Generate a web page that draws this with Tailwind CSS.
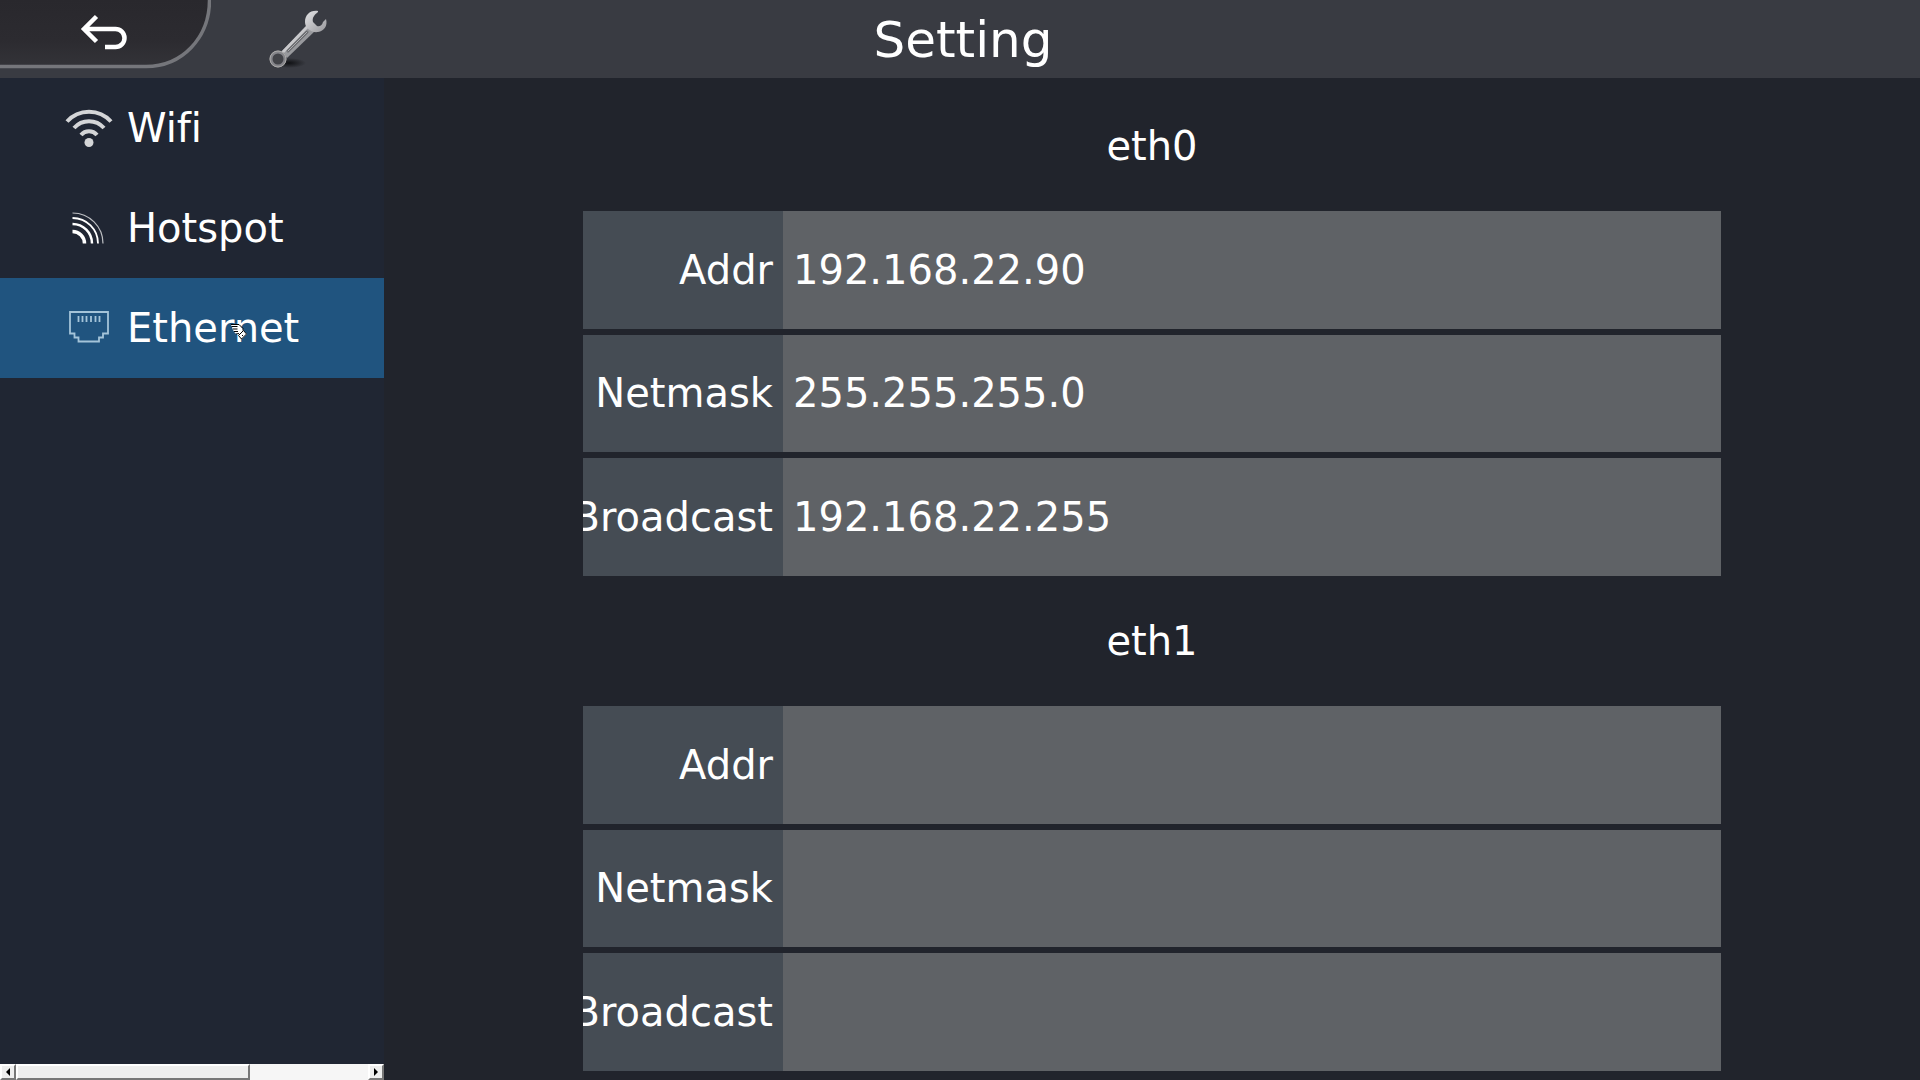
<!DOCTYPE html>
<html lang="en">
<head>
  <meta charset="UTF-8" />
  <meta name="viewport" content="width=device-width, initial-scale=1.0" />
  <title>Setting</title>
  <script src="https://cdn.jsdelivr.net/npm/@tailwindcss/browser@4"></script>
</head>
<body class="flex h-screen flex-col overflow-hidden bg-[#21242c] font-['DejaVu_Sans',sans-serif] text-[40px] leading-[48px] text-white [font-variant-ligatures:none]">
  <!-- Top bar -->
  <header class="grid h-[78px] shrink-0 grid-cols-[1fr_auto_1fr] items-center bg-[#393b42]">
    <div class="flex h-full items-start">
      <button aria-label="Back" class="h-[69px] w-[211px] shrink-0">
        <svg class="block" width="211" height="69" viewBox="0 0 211 69" fill="none">
          <defs>
            <linearGradient id="tab" x1="0" y1="0" x2="0" y2="1">
              <stop offset="0" stop-color="#29282d" />
              <stop offset="0.6" stop-color="#2c2b30" />
              <stop offset="1" stop-color="#333338" />
            </linearGradient>
          </defs>
          <path d="M0 0H209.500C209.500 38 182 66.500 146 66.500H0Z" fill="url(#tab)" />
          <path d="M209.500 0C209.500 38 182 66.500 146 66.500H0" stroke="#75767b" stroke-width="3.500" />
          <path d="M96.500 16.500L84 29L96.500 41.500M84 29H115.500A9 9 0 0 1 115.500 47H105" stroke="#fff" stroke-width="4.500" />
        </svg>
      </button>
      <svg class="ml-[51px] mt-1" width="72" height="68" viewBox="0 0 72 68" fill="none">
        <defs>
          <linearGradient id="steel" x1="0" y1="0" x2="1" y2="1">
            <stop offset="0" stop-color="#e4e4e6" />
            <stop offset="1" stop-color="#97979b" />
          </linearGradient>
          <radialGradient id="shade">
            <stop offset="0" stop-color="#101114" />
            <stop offset="1" stop-color="#101114" stop-opacity="0" />
          </radialGradient>
        </defs>
        <ellipse cx="27" cy="59" rx="17" ry="5" fill="url(#shade)" />
        <path d="M19 48L46 20L53 27L25 54Z" fill="#98999d" />
        <path d="M19 48L46 20L48 22L21 50Z" fill="#c9c9cc" />
        <path d="M26 47L45 28" stroke="#68696d" stroke-width="3" stroke-linecap="round" />
        <path d="M26 47L45 28" stroke="#adaeb1" stroke-width="1" stroke-linecap="round" />
        <path d="M56 7C48 6 43 11 43 18C43 24 49 29 56 28C62 27 66 22 64 15L61 18C60 22 57 23 55 22L51 18C50 14 52 11 56 8Z" fill="url(#steel)" />
        <circle cx="16" cy="55" r="7" fill="#424348" stroke="#85858a" stroke-width="3" />
        <circle cx="16" cy="55" r="8" stroke="#aaa9a8" />
      </svg>
    </div>
    <h1 class="pt-0.5 pl-1.5 text-[50px] leading-[60px]">Setting</h1>
    <div></div>
  </header>

  <div class="flex min-h-0 flex-1">
    <!-- Sidebar -->
    <aside class="flex w-1/5 flex-col justify-between bg-[#202633]">
      <nav>
        <a href="#wifi" class="flex h-[100px] items-center gap-3 pl-[62px]">
          <svg width="53" height="48" viewBox="0 0 53 48" fill="none" stroke="#d4d5d7" stroke-width="4">
            <path d="M5 17.500A29.500 29.500 0 0 1 49 17.500M12 24A20 20 0 0 1 42 24M19 31A10.500 10.500 0 0 1 35 31" />
            <circle cx="27" cy="38.500" r="4.500" fill="#d4d5d7" stroke="none" />
          </svg>
          <span>Wifi</span>
        </a>
        <a href="#hotspot" class="flex h-[100px] items-center gap-3 pl-[62px]">
          <svg width="53" height="48" viewBox="0 0 53 48" fill="none" stroke="#fff">
            <path d="M10.500 27.500A12 12 0 0 1 22.500 39.500" stroke-width="3.500" />
            <path d="M10.500 20A19.500 19.500 0 0 1 30 39.500" stroke-width="2.500" />
            <path d="M10.500 14A25.500 25.500 0 0 1 36 39.500" stroke-width="1.800" />
            <path d="M10.500 9A30.500 30.500 0 0 1 41 39.500" stroke-opacity="0.7" stroke-width="1.200" />
          </svg>
          <span>Hotspot</span>
        </a>
        <a href="#ethernet" aria-current="page" class="relative flex h-[100px] items-center gap-3 bg-[#20547f] pl-[62px]">
          <svg width="53" height="48" viewBox="0 0 53 48" fill="none" stroke="#a4c4d9" stroke-width="1.800">
            <path d="M8 8H46V29.500H41V33.500H37V37.500H16.500V33.500H12.500V29.500H8Z" />
            <path d="M16.500 12V18M20.500 12V18M24.500 12V18M29 12V18M33.500 12V18M37.500 12V18" />
          </svg>
          <span>Ethernet</span>
          <!-- Pointer -->
          <svg class="absolute top-[46px] left-[231px]" width="16" height="16" viewBox="0 0 16 16">
            <path d="M0 1H8L12 5L13 7L16 10L11 15L7 11L4 9L2 6L1 3Z" fill="#fff" />
            <path d="M0 0.500H8L12 4.500V6.500M0.500 2.500H6.500M2 5H6.500M3 7.500H7M5 10L8 9.500M7.500 11.500L12.500 6.500L15.500 10L10.500 15Z" fill="none" stroke="#000" />
            <path d="M11 11.500H12M11.500 11V12" stroke="#000" />
          </svg>
        </a>
      </nav>
      <!-- Scrollbar -->
      <div class="flex h-4 shrink-0 bg-[#f6f6f6]">
        <button aria-label="Scroll left" class="flex w-4 items-center justify-center border-2 border-t-white border-r-[#777] border-b-[#777] border-l-white bg-[#eee]">
          <svg width="4" height="8" viewBox="0 0 4 8"><path d="M4 0V8L0 4Z" /></svg>
        </button>
        <div class="w-[234px] border-2 border-t-white border-r-[#777] border-b-[#777] border-l-white bg-[#eee]"></div>
        <div class="flex-1"></div>
        <button aria-label="Scroll right" class="flex w-4 items-center justify-center border-2 border-t-white border-r-[#777] border-b-[#777] border-l-white bg-[#eee]">
          <svg width="4" height="8" viewBox="0 0 4 8"><path d="M0 0V8L4 4Z" /></svg>
        </button>
      </div>
    </aside>

    <!-- Interfaces -->
    <main class="flex-1 overflow-hidden pt-[3px]">
      <section class="mx-auto w-full max-w-[1138px]">
        <h2 class="flex h-[130px] items-center justify-center">eth0</h2>
        <div class="grid h-[365px] grid-rows-3 gap-1.5">
          <div class="flex">
            <label for="eth0-addr" class="flex w-[200px] items-center justify-end overflow-hidden bg-[#454c54] pr-2.5">Addr</label>
            <input id="eth0-addr" type="text" readonly value="192.168.22.90" class="min-w-0 flex-1 bg-[#5f6266] px-2.5 outline-none" />
          </div>
          <div class="flex">
            <label for="eth0-netmask" class="flex w-[200px] items-center justify-end overflow-hidden bg-[#454c54] pr-2.5">Netmask</label>
            <input id="eth0-netmask" type="text" readonly value="255.255.255.0" class="min-w-0 flex-1 bg-[#5f6266] px-2.5 outline-none" />
          </div>
          <div class="flex">
            <label for="eth0-broadcast" class="flex w-[200px] items-center justify-end overflow-hidden bg-[#454c54] pr-2.5">Broadcast</label>
            <input id="eth0-broadcast" type="text" readonly value="192.168.22.255" class="min-w-0 flex-1 bg-[#5f6266] px-2.5 outline-none" />
          </div>
        </div>
      </section>
      <section class="mx-auto w-full max-w-[1138px]">
        <h2 class="flex h-[130px] items-center justify-center">eth1</h2>
        <div class="grid h-[365px] grid-rows-3 gap-1.5">
          <div class="flex">
            <label for="eth1-addr" class="flex w-[200px] items-center justify-end overflow-hidden bg-[#454c54] pr-2.5">Addr</label>
            <input id="eth1-addr" type="text" readonly class="min-w-0 flex-1 bg-[#5f6266] px-2.5 outline-none" />
          </div>
          <div class="flex">
            <label for="eth1-netmask" class="flex w-[200px] items-center justify-end overflow-hidden bg-[#454c54] pr-2.5">Netmask</label>
            <input id="eth1-netmask" type="text" readonly class="min-w-0 flex-1 bg-[#5f6266] px-2.5 outline-none" />
          </div>
          <div class="flex">
            <label for="eth1-broadcast" class="flex w-[200px] items-center justify-end overflow-hidden bg-[#454c54] pr-2.5">Broadcast</label>
            <input id="eth1-broadcast" type="text" readonly class="min-w-0 flex-1 bg-[#5f6266] px-2.5 outline-none" />
          </div>
        </div>
      </section>
    </main>
  </div>
</body>
</html>
